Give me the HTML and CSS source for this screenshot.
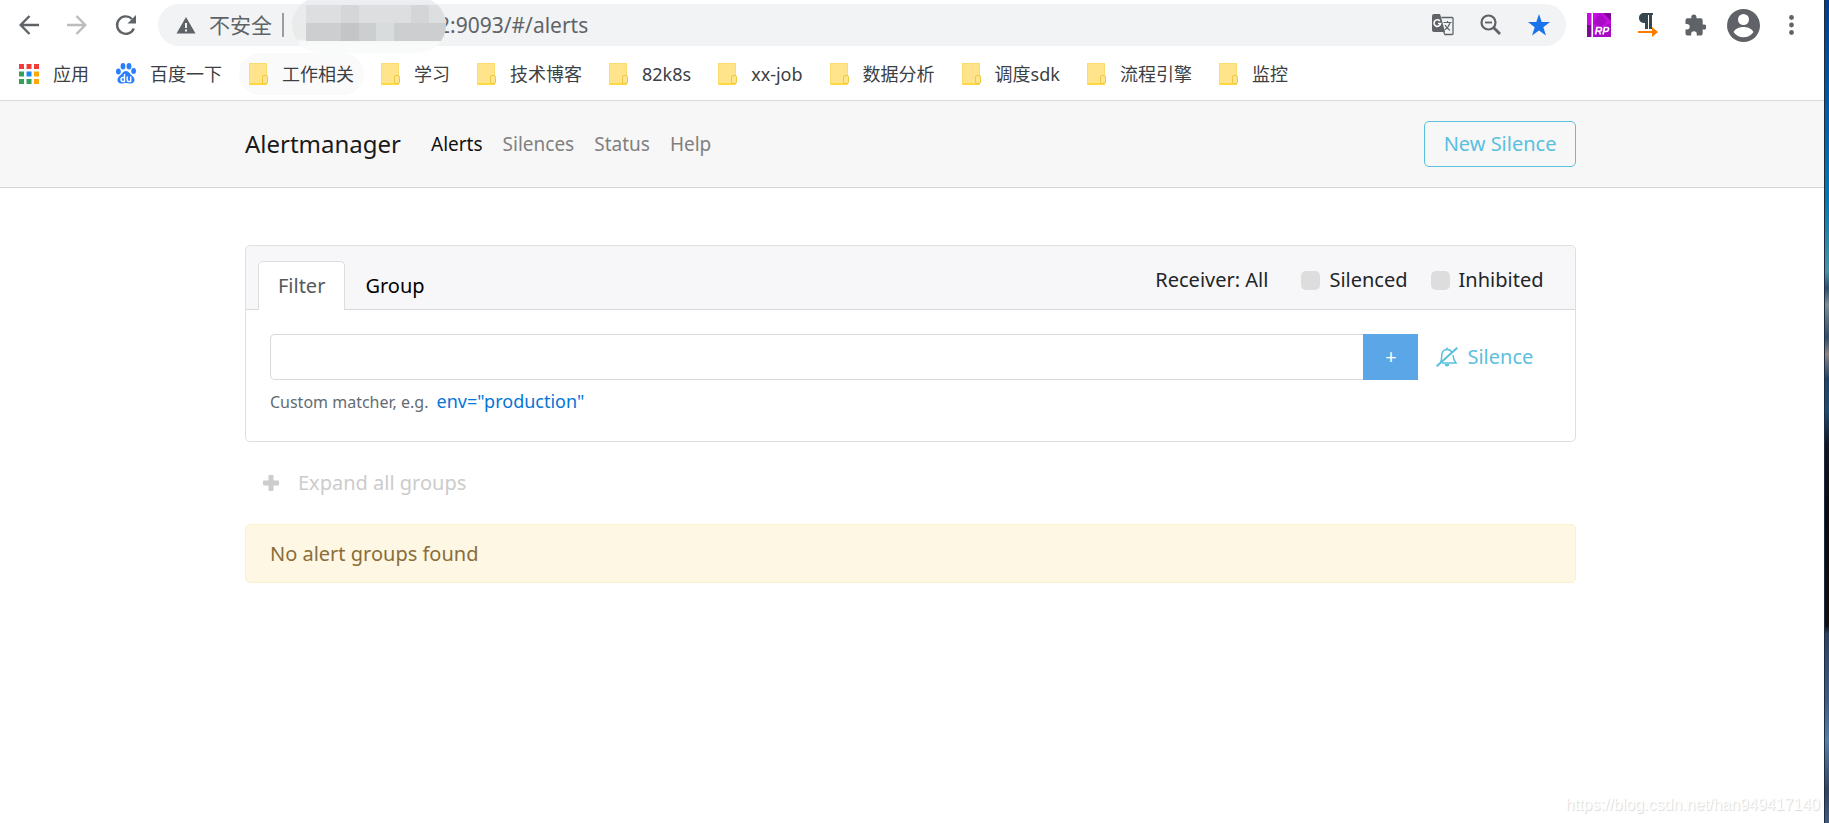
FILE: index.html
```html
<!DOCTYPE html>
<html lang="zh-CN">
<head>
<meta charset="utf-8">
<title>Alertmanager</title>
<link rel="stylesheet" href="styles.css">
</head>
<body>
<div class="window">
  <header class="chrome">
    <div class="toolbar">
      <div class="history">
        <button class="tool" aria-label="后退"><svg width="20" height="24" viewBox="0 0 20 24" fill="none" stroke="#5f6368" stroke-width="2.400"><path d="M20 12H2M10.500 3L1.700 12l8.800 9"/></svg></button>
        <button class="tool" aria-label="前进"><svg width="20" height="24" viewBox="0 0 20 24" fill="none" stroke="#babcbe" stroke-width="2.400"><path d="M0 12h18M9.500 3l8.800 9-8.800 9"/></svg></button>
        <button class="tool" aria-label="刷新"><svg width="22" height="24" viewBox="0 0 22 24"><path d="M18.800 15.500A8.700 8.700 0 1 1 17 6" fill="none" stroke="#5f6368" stroke-width="2.400"/><path d="M21 2v8.500h-8.500z" fill="#5f6368"/></svg></button>
      </div>
      <div class="address">
        <svg width="20" height="20" viewBox="0 0 20 20"><path d="M10 2l9.500 16.500H.5z" fill="#5f6368"/><path d="M9 8h2v5H9zM9 14.500h2v2H9z" fill="#f1f3f4"/></svg>
        <span class="insecure">不安全</span>
        <span class="divider"></span>
        <span class="url"><span class="mask"><span class="mosaic"><i></i><i></i><i></i><i></i><i></i><i></i><i></i><i></i><i></i><i></i><i></i><i></i><i></i><i></i><i></i><i></i></span></span>2:9093/#/alerts</span>
        <span class="page-actions">
          <button class="action" aria-label="翻译"><svg width="22" height="22" viewBox="0 0 22 22"><path d="M2 0h6l1 3 4 15H2a2 2 0 0 1-2-2V2a2 2 0 0 1 2-2z" fill="#5f6368"/><path d="M9.500 3.500H20a1 1 0 0 1 1 1v15a1 1 0 0 1-1 1h-7l-1.500-3" fill="none" stroke="#5f6368" stroke-width="1.300"/><path d="M7.800 6.900A3.300 3.300 0 1 0 8.600 9.500H6" fill="none" stroke="#fff" stroke-width="1.600"/><path d="M11.500 8.500h8M15.500 7v1.500M18 8.500c-1 4-3 6-5.500 7.500M13 11c1 2 3 4 5 5.500" fill="none" stroke="#5f6368" stroke-width="1.200"/></svg></button>
          <button class="action" aria-label="缩小"><svg width="22" height="22" viewBox="0 0 22 22" fill="none" stroke="#5f6368"><circle cx="8.500" cy="8.500" r="7" stroke-width="2.200"/><path d="M5 8.500h7" stroke-width="1.800"/><path d="M13.500 13.500L20 20" stroke-width="2.800"/></svg></button>
          <button class="action" aria-label="收藏"><svg width="22" height="22" viewBox="0 0 22 22" fill="#1a73e8"><path d="M11 0l2.700 8H22l-6.700 5.200L18 21.500 11 16.600 4 21.500l2.700-8.300L0 8h8.300z"/></svg></button>
        </span>
      </div>
      <div class="extensions">
        <button class="ext" aria-label="Axure RP"><svg width="24" height="24" viewBox="0 0 24 24"><path fill="#c40fe0" d="M0 0h24v24H0z"/><path fill="#7d0a96" d="M16 0h8v8zM0 12h4v12H0z"/><path fill="#a90bc4" d="M6 10l7-10 7 8-6 6zM6 24l5-8 13-6v14z"/><path fill="#fff" d="M4.500 0H6v24H4.500z"/><path d="M8.500 21.500l1.500-7h3q2 0 1.500 2T12 18H9.500M12 18l1.500 3.500M16 21.500l1.500-7h2.500q2 0 1.500 2T19 18.500h-2" fill="none" stroke="#fff" stroke-width="1.700"/></svg></button>
        <button class="ext" aria-label="段落"><svg width="20" height="24" viewBox="0 0 20 24"><path d="M6 0h9v2h-1v14h-3V2h-1v14H7V10C3 10 1 8 1 5s2-5 5-5z" fill="#37474f"/><path d="M0 18h14v-4l6 5-6 5v-4H0z" fill="#ff7c00"/></svg></button>
        <button class="ext" aria-label="扩展程序"><svg width="21" height="22" viewBox="0 0 22 22" fill="#5f6368"><path d="M20 10.500h-1.500V6a2 2 0 0 0-2-2H12V2.700a2.700 2.700 0 0 0-5.400 0V4H2.500a2 2 0 0 0-2 2v4H2a2.900 2.900 0 0 1 0 5.800H.5V20a2 2 0 0 0 2 2h4v-1.500a2.900 2.900 0 0 1 5.800 0V22h4.200a2 2 0 0 0 2-2v-4.200H20a2.600 2.600 0 0 0 0-5.300z"/></svg></button>
        <button class="ext avatar" aria-label="用户"><svg width="33" height="33" viewBox="0 0 33 33"><circle cx="16.500" cy="16.500" r="16.500" fill="#5f6368"/><circle cx="16.500" cy="10.500" r="5.500" fill="#fff"/><path d="M6.500 23c2-4 7-5 10-5s8 1 10 5a12 12 0 0 1-20 0z" fill="#fff"/></svg></button>
        <button class="ext" aria-label="菜单"><svg width="5" height="20" viewBox="0 0 5 20" fill="#5f6368"><circle cx="2.500" cy="2.500" r="2.400"/><circle cx="2.500" cy="10" r="2.400"/><circle cx="2.500" cy="17.500" r="2.400"/></svg></button>
      </div>
    </div>
    <nav class="bookmarks" aria-label="书签">
      <a class="mark site" href="#"><svg width="20" height="20" viewBox="0 0 20 20"><path fill="#f23c37" d="M0 0h5v5H0zM7.500 0h5v5h-5zM15 0h5v5h-5z"/><path fill="#34a05a" d="M0 7.500h5v5H0zM0 15h5v5H0zM7.500 15h5v5h-5z"/><path fill="#1e88f5" d="M7.500 7.500h5v5h-5z"/><path fill="#fba90a" d="M15 7.500h5v5h-5zM15 15h5v5h-5z"/></svg>应用</a>
      <a class="mark site" href="#"><svg width="20" height="21" viewBox="0 0 20 21"><g fill="#2a7fff"><ellipse cx="2.400" cy="8.500" rx="2.400" ry="3"/><ellipse cx="7" cy="3.200" rx="2.400" ry="3.200"/><ellipse cx="13" cy="3.200" rx="2.400" ry="3.200"/><ellipse cx="17.600" cy="8" rx="2.400" ry="3"/><path d="M10 8c3 0 4 3 6 4.500 4 3 3 7.500-1 8-2 .3-3-.5-5-.5s-3 .8-5 .5c-4-.5-5-5-1-8C6 11 7 8 10 8z"/></g><path d="M8.500 11v7.500H7a2 2 0 0 1 0-4h1.500M11.200 13.500V17q0 1.500 1.500 1.500h2v-5" fill="none" stroke="#fff" stroke-width="1.400"/></svg>百度一下</a>
      <a class="mark hovered" href="#"><span class="folder"></span>工作相关</a>
      <a class="mark" href="#"><span class="folder"></span>学习</a>
      <a class="mark" href="#"><span class="folder"></span>技术博客</a>
      <a class="mark" href="#"><span class="folder"></span>82k8s</a>
      <a class="mark" href="#"><span class="folder"></span>xx-job</a>
      <a class="mark" href="#"><span class="folder"></span>数据分析</a>
      <a class="mark" href="#"><span class="folder"></span>调度sdk</a>
      <a class="mark" href="#"><span class="folder"></span>流程引擎</a>
      <a class="mark" href="#"><span class="folder"></span>监控</a>
    </nav>
  </header>
  <div class="navbar">
    <div class="container nav-row">
      <a class="brand" href="#">Alertmanager</a>
      <nav class="links">
        <a class="link active" href="#">Alerts</a>
        <a class="link" href="#">Silences</a>
        <a class="link" href="#">Status</a>
        <a class="link" href="#">Help</a>
      </nav>
      <button class="new-silence">New Silence</button>
    </div>
  </div>
  <main class="container">
    <section class="card">
      <div class="card-header">
        <div class="tabs" role="tablist">
          <button class="tab selected" role="tab" aria-selected="true">Filter</button>
          <button class="tab" role="tab" aria-selected="false">Group</button>
        </div>
        <div class="options">
          <span class="receiver">Receiver: All</span>
          <label class="check"><input type="checkbox">Silenced</label>
          <label class="check"><input type="checkbox">Inhibited</label>
        </div>
      </div>
      <div class="card-body">
        <div class="filter-row">
          <input class="matcher" id="matcher" type="text" aria-label="Custom matcher">
          <button class="add" aria-label="Add matcher">+</button>
          <a class="silence" href="#"><svg width="22" height="20" viewBox="0 0 22 20" fill="none" stroke="#5bc0de"><path d="M4.500 15.500C6 13 5.500 9 6 6.500 7 3 9 2.500 11 2.500s4 .5 5 3M17 8c.2 3 1 5.500 3 8H6" stroke-width="1.500"/><path d="M11 .5v2" stroke-width="1.500"/><path d="M8.500 17h5q-.5 2.500-2.500 2.500T8.500 17z" fill="#5bc0de" stroke="none"/><path d="M.7 19.300L21.300.7" stroke-width="2"/></svg>Silence</a>
        </div>
        <label class="hint" for="matcher">Custom matcher, e.g. <a class="example" href="#">env="production"</a></label>
      </div>
    </section>
    <button class="expand"><svg width="16" height="16" viewBox="0 0 16 16" fill="#ccc"><path d="M6 0h4a1 1 0 0 1 .5 1v4.500H15a1 1 0 0 1 1 1v3a1 1 0 0 1-1 1h-4.500V15a1 1 0 0 1-1 1h-3a1 1 0 0 1-1-1v-4.500H1a1 1 0 0 1-1-1v-3a1 1 0 0 1 1-1h4.500V1a1 1 0 0 1 .5-1z"/></svg>Expand all groups</button>
    <p class="notice">No alert groups found</p>
  </main>
  <div class="watermark">https://blog.csdn.net/han949417140</div>
</div>
<div class="desktop"></div>
</body>
</html>
```
FILE: styles.css
```css
* { box-sizing: border-box; }
body {
  margin: 0;
  min-height: 100vh;
  display: flex;
  background: #fff;
  color: #212529;
  font-family: "Noto Sans", "Noto Sans CJK SC", sans-serif;
  font-size: 20px;
  line-height: 30px;
}
button { font: inherit; padding: 0; border: 0; background: none; cursor: pointer; }
a { text-decoration: none; color: inherit; }
svg { display: block; flex: none; }
.window { flex: 1; min-width: 0; position: relative; }
.desktop {
  flex: none;
  width: 5px;
  border-left: 1px solid #1d2c40;
  background: linear-gradient(#003d8c 0, #0060a8 15%, #007ab0 24%, #4a93a8 33%, #29506e 35%, #7d8f92 37%, #2f4d66 41%, #91847f 43%, #1d4468 46%, #1b4d70 50%, #15151f 54%, #0c0a0d 62%, #140e0c 76%, #2b4260 77%, #3c5d85 85%, #5580aa 90%, #30435f 96%, #3f5c80 100%);
}

.chrome { border-bottom: 1px solid #d8dae0; color: #3c4043; }
.toolbar { display: flex; align-items: center; height: 50px; padding: 0 30px 0 19px; }
.history { display: flex; gap: 28px; margin-right: 21px; }
.address {
  flex: 1;
  display: flex;
  align-items: center;
  height: 42px;
  margin-right: 21px;
  padding: 0 16px 0 18px;
  border-radius: 21px;
  background: #f1f3f4;
  color: #5f6368;
  font-size: 21px;
}
.insecure { margin-left: 13px; }
.divider { width: 2px; height: 24px; margin-left: 10px; background: #9a9da1; }
.url { display: flex; align-items: center; margin-left: 8px; }
.mask {
  position: relative;
  z-index: 1;
  display: flex;
  align-items: center;
  width: 154px;
  height: 56px;
  margin: -7px -8px -7px 0;
  padding-left: 14px;
  border-radius: 28px;
  background: linear-gradient(#f0f0f5 0, #e9ebec 20%, #e9ebeb 75%, #f8faf9 80%, #fafbfb 100%);
  overflow: hidden;
}
.mosaic { flex: 1; display: grid; grid-template-columns: repeat(8, 1fr); grid-auto-rows: 18px; margin-top: -4px; }
.mosaic i { background: #dcdee0; }
.mosaic i:nth-child(3) { background: #d5d6d8; }
.mosaic i:nth-child(7) { background: #d4d5d7; }
.mosaic i:nth-child(n + 9) { background: #cdced0; }
.mosaic i:nth-child(11) { background: #c4c5c7; }
.mosaic i:nth-child(13) { background: #d9dcdd; }
.page-actions { display: flex; gap: 26px; margin-left: auto; }
.extensions { display: flex; align-items: center; gap: 27px; }
.avatar { margin: 0 2px 0 -6px; }
.bookmarks { display: flex; align-items: center; height: 50px; padding: 0 0 3px 19px; gap: 27px; font-size: 18px; white-space: nowrap; }
.mark { display: flex; align-items: center; gap: 15px; }
.site { gap: 14px; }
.hovered { position: relative; }
.hovered::before {
  content: "";
  position: absolute;
  z-index: -1;
  inset: -6px -10px;
  border-radius: 21px;
  background: #fafafa;
}
.folder {
  position: relative;
  width: 18px;
  height: 22px;
  border: 1px solid #fbdc6c;
  border-bottom: 2px solid #ffd83f;
  border-radius: 1px;
  background: #ffe48c;
}
.folder::after {
  content: "";
  position: absolute;
  right: -2px;
  bottom: -1px;
  width: 4px;
  height: 7px;
  border: 1px solid #efc943;
  border-radius: 2px;
  background: #ffe48c;
}

.container { width: 73%; margin: 0 auto 0 13.43%; }
.navbar { border-bottom: 1px solid #d5d5d5; background: #f7f7f7; }
.nav-row { display: flex; align-items: center; height: 86px; }
.brand { color: #1a1a1a; font-size: 24px; }
.links { display: flex; gap: 20px; margin-left: 30px; font-size: 19px; }
.link { color: #808080; }
.link.active { color: #111; }
.new-silence {
  height: 46px;
  margin-left: auto;
  padding: 0 19px;
  border: 1px solid #5bc0de;
  border-radius: 5px;
  color: #5bc0de;
}

.card { margin-top: 57px; border: 1px solid #dfdfdf; border-radius: 5px; }
.card-header {
  display: flex;
  justify-content: space-between;
  padding: 15px 32px 0 12px;
  border-bottom: 1px solid #d9d9d9;
  border-radius: 5px 5px 0 0;
  background: #f7f7f9;
}
.tabs { display: flex; margin-bottom: -1px; }
.tab { height: 49px; padding: 0 19px; border: 1px solid transparent; border-bottom: 0; border-radius: 5px 5px 0 0; color: #000; }
.tab.selected { border-color: #ddd; background: #fff; color: #55595c; }
.options { display: flex; align-items: center; height: 38px; }
.check { display: flex; align-items: center; gap: 9px; margin-left: 23px; }
.receiver + .check { margin-left: 33px; }
.check input { appearance: none; width: 19px; height: 19px; margin: 0; border-radius: 5px; background: #ddd; }
.card-body { padding: 24px; }
.filter-row { display: flex; align-items: center; }
.matcher { flex: 1; min-width: 0; height: 46px; padding: 0 15px; border: 1px solid #d9d9d9; border-right: 0; border-radius: 5px 0 0 5px; font: inherit; }
.add { width: 55px; height: 46px; background: #5ba6e6; color: #fff; }
.silence { display: flex; align-items: center; gap: 9px; width: 133px; padding-left: 18px; color: #5bc0de; }
.hint { display: block; margin-top: 6px; color: #636c72; font-size: 16px; }
.example { margin-left: 4px; color: #0275d8; font-size: 18px; }
.expand { display: flex; align-items: center; gap: 19px; height: 46px; margin-top: 18px; padding-left: 18px; color: #ccc; }
.notice { margin: 18px 0 0; padding: 14px 24px 13px; border: 1px solid #faf2cc; border-radius: 5px; background: #fdf7e3; color: #8a6d3b; }
.watermark {
  position: absolute;
  right: 4px;
  bottom: 6px;
  color: #fff;
  font: 16px/24px "Liberation Sans", Arial, sans-serif;
  text-shadow: 1px 1px 1px #d8d8d8;
}
```
